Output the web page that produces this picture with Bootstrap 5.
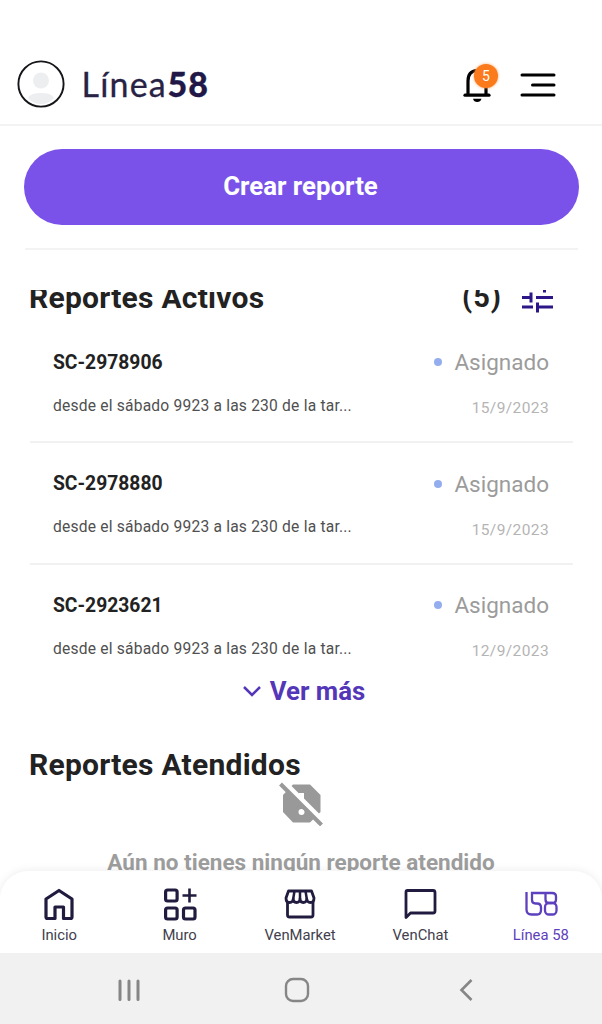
<!DOCTYPE html>
<html lang="es">
<head>
<meta charset="utf-8">
<meta name="viewport" content="width=device-width, initial-scale=1">
<title>Línea58</title>
<link href="https://cdn.jsdelivr.net/npm/bootstrap@5.3.0/dist/css/bootstrap.min.css" rel="stylesheet">
<style>
body{font-family:Roboto,"Liberation Sans",sans-serif;color:#222;background:#fff;white-space:nowrap}
svg{display:block;flex:none}
.screen{height:1024px;overflow:hidden}
.top-bar{height:126px;padding:60px 46px 0 17px;border-bottom:2px solid #f3f3f3}
.avatar{width:48px;height:48px}
.brand{font-family:Lato,sans-serif;font-size:34px;line-height:48px;color:#282244;margin-left:16.5px;letter-spacing:1.2px;-webkit-text-stroke:.3px}
.brand b{font-weight:900;color:#211848;letter-spacing:1px;margin-left:.5px}
.bell{width:38px;height:48px;margin-right:20px}
.count{left:12px;top:4px;width:24px;height:24px;background:#fb7a1c;color:#fff;font-size:14px;line-height:24px;box-shadow:0 0 3px #fba668}
.create{margin:23px 23px 0 24px;height:76px;background:#7a52e9;color:#fff;font-size:25.8px;font-weight:700;border:0;padding:0 2px 2px 0}
.create:hover{background:#6d44df;color:#fff}
.rule{margin:23px 24px 0 25px;height:2px;background:#f3f3f3}
.reports{margin-top:40px;height:581px;overflow:hidden}
.section-title{font-size:30px;font-weight:700;line-height:40px;letter-spacing:.25px;margin:0;color:#222}
.active-head{margin-top:-13px;height:42px;padding:0 49px 0 29px}
.total{font-size:29px;letter-spacing:1px;margin-right:20px}
.filter{margin-bottom:2px}
.report{height:121.5px;margin:0 29px 0 30px;padding:25px 24px 0 23px;border-bottom:2px solid #f1f1f1}
.report-list{padding-top:2.5px}
.report:last-child{border-color:transparent}
.code{font-size:19.3px;font-weight:700;line-height:31px}
.state{font-size:22.5px;line-height:30px;color:#9b9b9b}
.state i{width:8px;height:8px;border-radius:50%;background:#94adee;margin-right:12px}
.details{padding-top:16px}
.text{font-size:15.6px;line-height:24px;color:#505050;letter-spacing:.2px}
.date{font-size:15.5px;line-height:24px;color:#b4b4b4;letter-spacing:.4px;margin-top:2.5px}
.more{height:34px;font-size:25.8px;font-weight:700;line-height:34px;color:#5436b8;text-decoration:none;gap:9px;margin-top:-12.5px;padding-left:6px}
.done-title{margin:37px 0 0 29px}
.empty{font-size:22.5px;font-weight:700;line-height:30px;color:#9d9d9d;margin-top:21px}
.tabs{height:82px;border-radius:28px 28px 0 0;background:#fff;box-shadow:0 -1px 9px rgba(0,0,0,.07);padding:15px 0 0}
.tab{width:120.5px;margin-left:-1px;margin-right:1px;color:#42404d;font-size:14.8px;line-height:20px;text-decoration:none}
.tab.on{color:#5d40bd}
.tab svg{margin-bottom:3px}
.system{height:71px;background:#f1f1f1;padding:3px 129px 0 117px;z-index:1}
.home-key{margin-right:6px}
</style>
<script src="https://cdn.jsdelivr.net/npm/bootstrap@5.3.0/dist/js/bootstrap.bundle.min.js"></script>
</head>
<body>
<div class="screen d-flex flex-column">
<header class="top-bar d-flex align-items-start flex-shrink-0">
  <svg class="avatar" viewBox="0 0 48 48"><circle cx="24" cy="24" r="22.6" fill="#fff" stroke="#16161a" stroke-width="1.9"/><circle cx="24" cy="20.500" r="8" fill="#eceef0"/><path d="M11 38q2-5 13-5t13 5q-5 6-13 6t-13-6z" fill="#eceef0"/></svg>
  <div class="brand">Línea<b>58</b></div>
  <div class="bell position-relative ms-auto">
    <svg width="38" height="48" viewBox="0 0 38 48" fill="none" stroke="#000" stroke-width="3.2"><path d="M6 35V21Q6 11 15 10.500Q24 11 24 21V35"/><path d="M3 35.200H27" stroke-linecap="round"/><path d="M11 38.800H19.500Q18.500 42 15.200 42T11 38.800z" fill="#000" stroke="none"/></svg>
    <span class="count position-absolute rounded-circle text-center">5</span>
  </div>
  <svg class="mt-2" width="36" height="34" viewBox="0 0 36 34" stroke="#000" stroke-width="3" stroke-linecap="round"><path d="M2 7H34M12.500 17H34M2 27H34"/></svg>
</header>
<button class="btn create rounded-pill flex-shrink-0">Crear reporte</button>
<div class="rule flex-shrink-0"></div>
<main class="reports flex-shrink-0">
  <div class="active-head d-flex align-items-center">
    <h2 class="section-title me-auto">Reportes Activos</h2>
    <b class="total">(5)</b>
    <svg class="filter" width="31" height="32" viewBox="0 0 31 32" stroke="#2d1687" stroke-width="3" fill="none"><path d="M0 6H18M21 6H31M22.500 1V11.500M0 16.500H10M14 16.500H31M9 11.500V21.500M0 26H11M15 26H31M15.500 21.500V31.500"/></svg>
  </div>
  <div class="report-list">
    <article class="report">
      <div class="d-flex justify-content-between"><span class="code">SC-2978906</span><span class="state d-flex align-items-center"><i></i>Asignado</span></div>
      <div class="details d-flex justify-content-between"><span class="text">desde el sábado 9923 a las 230 de la tar...</span><span class="date">15/9/2023</span></div>
    </article>
    <article class="report">
      <div class="d-flex justify-content-between"><span class="code">SC-2978880</span><span class="state d-flex align-items-center"><i></i>Asignado</span></div>
      <div class="details d-flex justify-content-between"><span class="text">desde el sábado 9923 a las 230 de la tar...</span><span class="date">15/9/2023</span></div>
    </article>
    <article class="report">
      <div class="d-flex justify-content-between"><span class="code">SC-2923621</span><span class="state d-flex align-items-center"><i></i>Asignado</span></div>
      <div class="details d-flex justify-content-between"><span class="text">desde el sábado 9923 a las 230 de la tar...</span><span class="date">12/9/2023</span></div>
    </article>
  </div>
  <a class="more d-flex justify-content-center align-items-center" href="#"><svg width="18" height="12" viewBox="0 0 18 12" fill="none" stroke="currentColor" stroke-width="2.500"><path d="M1 2L9 10L17 2"/></svg>Ver más</a>
  <h2 class="section-title done-title">Reportes Atendidos</h2>
  <div class="text-center">
    <svg class="mx-auto" style="margin-top:-3px" width="44" height="44" viewBox="0 0 44 44"><path d="M14 2.500H31L41.500 13V30L31 40.500H14L4 30V13z" fill="#999"/><path d="M20 11H25V23H20z" fill="#fff"/><circle cx="22.500" cy="30" r="3" fill="#fff"/><path d="M3-2L46 41" stroke="#fff" stroke-width="5"/><path d="M1.500 2L42.500 43" stroke="#999" stroke-width="4"/></svg>
    <div class="empty">Aún no tienes ningún reporte atendido</div>
  </div>
</main>
<nav class="tabs d-flex flex-shrink-0 position-relative">
  <a class="tab d-flex flex-column align-items-center" href="#"><svg width="36" height="36" viewBox="0 0 36 36" fill="none" stroke="#211c3f" stroke-width="3.200" stroke-linejoin="round"><path d="M5 13L18 4.500L31 13V31Q31 32.500 29.500 32.500H22.500V21H14V32.500H6.500Q5 32.500 5 31z"/></svg>Inicio</a>
  <a class="tab d-flex flex-column align-items-center" href="#"><svg width="36" height="36" viewBox="0 0 36 36" fill="none" stroke="#211c3f" stroke-width="3.200"><rect x="3.600" y="4" width="11.500" height="11" rx="2"/><rect x="3.600" y="22" width="11.500" height="11" rx="2"/><rect x="21.500" y="22" width="11.500" height="11" rx="2"/><path d="M20.500 9.500H34.500M27.500 2.500V16.500" stroke-width="2.600"/></svg>Muro</a>
  <a class="tab d-flex flex-column align-items-center" href="#"><svg width="36" height="36" viewBox="0 0 36 36" fill="none" stroke="#211c3f" stroke-width="2.800" stroke-linejoin="round"><path d="M6.500 5H29.500L32 12Q32 16.500 28.500 16.500T24.800 13Q24.500 16.500 21.300 16.500T18 13Q17.800 16.500 14.500 16.500T11.200 13Q11 16.500 7.500 16.500T4 12z"/><path d="M12.500 5L11.200 13M18 5V13M23.500 5L24.800 13" stroke-width="2.500"/><path d="M5.500 16V29Q5.500 31 7.500 31H29Q31 31 31 29V16"/></svg>VenMarket</a>
  <a class="tab d-flex flex-column align-items-center" href="#"><svg width="36" height="36" viewBox="0 0 36 36" fill="none" stroke="#211c3f" stroke-width="2.800" stroke-linejoin="round"><path d="M5.500 4.500H31Q33 4.500 33 6.500V25Q33 27 31 27H8.500L4 31.500V6Q4 4.500 5.500 4.500z"/></svg>VenChat</a>
  <a class="tab on d-flex flex-column align-items-center" href="#"><svg width="36" height="36" viewBox="0 0 36 36" fill="none" stroke="#5d40bd" stroke-width="2.300"><path d="M3.500 6V23.500Q3.500 28.500 8.500 28.500H14Q18 28.500 18 24V21.500Q18 17.500 14 17.500H12.500Q9 17.500 9 14V7H29Q33 7 33 10.500V13.500Q33 17 29 17H26Q22.500 17 22.500 13.500V7"/><rect x="22" y="17" width="11.500" height="11.500" rx="4"/></svg>Línea 58</a>
</nav>
<footer class="system d-flex align-items-center justify-content-between flex-shrink-0">
  <svg width="24" height="24" viewBox="0 0 24 24" stroke="#868686" stroke-width="3" stroke-linecap="round"><path d="M3 3V21.500M12 3V21.500M21 3V21.500"/></svg>
  <svg class="home-key" width="26" height="26" viewBox="0 0 26 26" fill="none" stroke="#868686" stroke-width="2.400"><rect x="2" y="2" width="22" height="22" rx="7"/></svg>
  <svg width="14" height="24" viewBox="0 0 14 24" fill="none" stroke="#868686" stroke-width="2.600"><path d="M12.500 2L2.500 12L12.500 22"/></svg>
</footer>
</div>
</body>
</html>
